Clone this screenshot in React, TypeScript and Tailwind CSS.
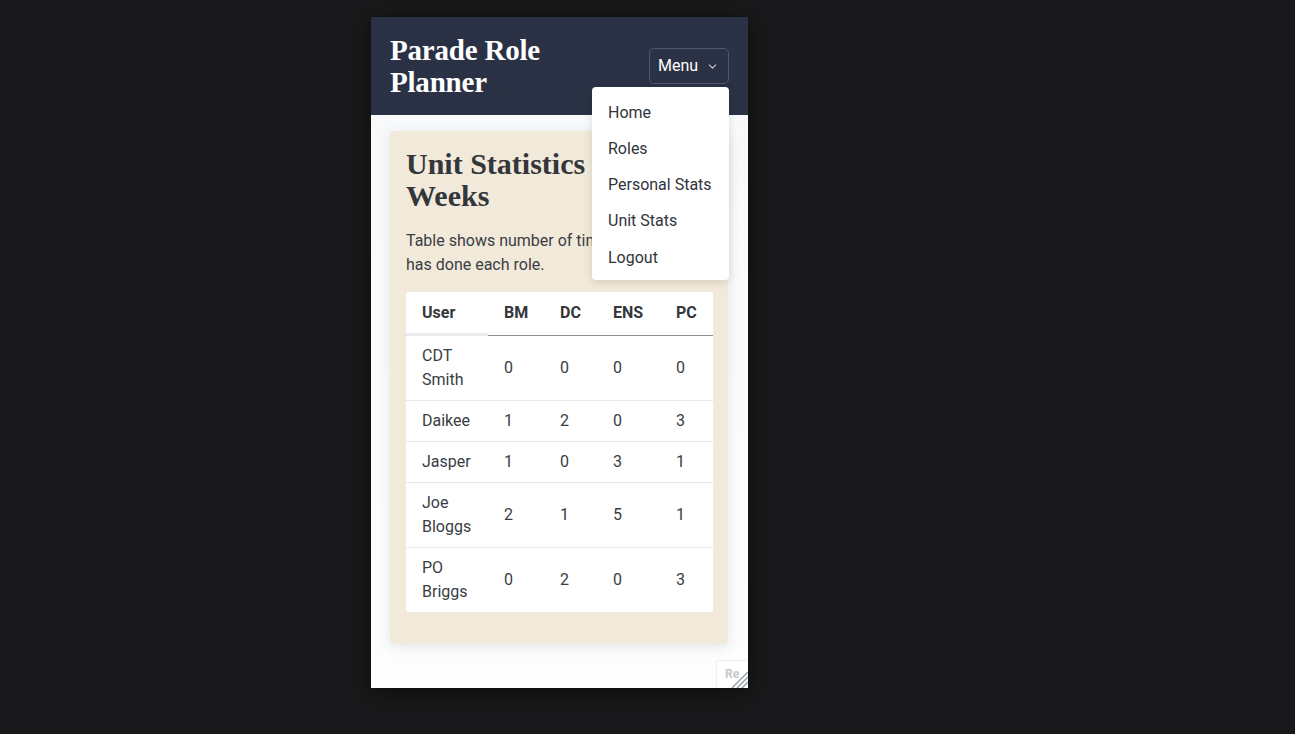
import { ChevronDown } from "lucide-react";

const rows = [
  { user: "CDT Smith", bm: 0, dc: 0, ens: 0, pc: 0 },
  { user: "Daikee", bm: 1, dc: 2, ens: 0, pc: 3 },
  { user: "Jasper", bm: 1, dc: 0, ens: 3, pc: 1 },
  { user: "Joe Bloggs", bm: 2, dc: 1, ens: 5, pc: 1 },
  { user: "PO Briggs", bm: 0, dc: 2, ens: 0, pc: 3 },
];

const menuItems = ["Home", "Roles", "Personal Stats", "Unit Stats", "Logout"];

const serif = { fontFamily: "'Liberation Serif', 'DejaVu Serif', serif" };

const App = () => {
  return (
    <div className="min-h-screen w-full bg-[#19191b] pl-[371px] pt-[17px] font-['Roboto',sans-serif]">
      <div className="w-[377px] h-[671px] flex flex-col bg-[#f8f9fb] shadow-[0_4px_20px_rgba(0,0,0,0.5)] relative overflow-hidden">
        {/* header */}
        <header className="h-[98px] shrink-0 bg-gradient-to-br from-[#2a3144] to-[#2b3245] flex items-start justify-between px-[19px] pt-[17px] relative z-20">
          <h1
            className="text-white font-bold text-[29px] leading-[32px] w-[170px] tracking-[-0.2px]"
            style={serif}
          >
            Parade Role Planner
          </h1>
          <div className="relative mt-[14px]">
            <button className="h-[36px] w-[80px] flex items-center justify-between pl-[8px] pr-[9px] border border-[#4d5870] rounded-[5px] text-white text-[16px]">
              <span>Menu</span>
              <ChevronDown className="w-[13px] h-[13px] text-[#c9ced8]" strokeWidth={2} />
            </button>
            <div className="absolute right-0 top-[39px] w-[137px] bg-white rounded-[4px] shadow-[0_2px_10px_rgba(0,0,0,0.12)] pt-[8px] pb-[4px]">
              {menuItems.map((m, i) => (
                <div
                  key={m}
                  className={`px-[16px] flex items-center whitespace-nowrap text-[16px] text-[#30343b] ${i === menuItems.length - 1 ? "h-[37px]" : "h-[36px]"}`}
                >
                  {m}
                </div>
              ))}
            </div>
          </div>
        </header>

        {/* main */}
        <main className="flex-1 px-[19px] pt-[16px] bg-gradient-to-b from-[#f8f9fb] to-[#fdfdfe]">
          <div className="w-[338px] bg-[#f1e9d9] rounded-[4px] shadow-[0_3px_12px_rgba(60,70,90,0.12)] px-[16px] pt-[17px] pb-[32px]">
            <h2 className="text-[#33363b] font-bold text-[30px] leading-[32px]" style={serif}>
              Unit Statistics – Last 4 Weeks
            </h2>
            <p className="mt-[17px] text-[16px] leading-[24px] text-[#3a3d43]">
              Table shows number of times each user has done each role.
            </p>
            <div className="mt-[15px] bg-white rounded-[3px] w-[307px]">
              <table className="w-[307px] text-[16px] text-[#3a3d43] border-collapse table-fixed">
                <colgroup>
                  <col className="w-[82px]" />
                  <col className="w-[56px]" />
                  <col className="w-[53px]" />
                  <col className="w-[63px]" />
                  <col className="w-[53px]" />
                </colgroup>
                <thead>
                  <tr className="h-[43px]">
                    <th className="text-left font-bold px-[16px] border-b border-[#e9ebef] shadow-[inset_0_-2px_0_#e9ebef] text-[#33363b]">User</th>
                    <th className="text-left font-bold px-[16px] border-b border-[#8a8d93] text-[#33363b]">BM</th>
                    <th className="text-left font-bold px-[16px] border-b border-[#8a8d93] text-[#33363b]">DC</th>
                    <th className="text-left font-bold px-[16px] border-b border-[#8a8d93] text-[#33363b]">ENS</th>
                    <th className="text-left font-bold px-[16px] border-b border-[#8a8d93] text-[#33363b]">PC</th>
                  </tr>
                </thead>
                <tbody>
                  {rows.map((r, i) => (
                    <tr key={r.user} className={i < rows.length - 1 ? "border-b border-[#e6e7ea]" : ""}>
                      <td className="px-[16px] py-[8px] leading-[24px]">{r.user}</td>
                      <td className="px-[16px] py-[8px] leading-[24px]">{r.bm}</td>
                      <td className="px-[16px] py-[8px] leading-[24px]">{r.dc}</td>
                      <td className="px-[16px] py-[8px] leading-[24px]">{r.ens}</td>
                      <td className="px-[16px] py-[8px] leading-[24px]">{r.pc}</td>
                    </tr>
                  ))}
                </tbody>
              </table>
            </div>
          </div>
        </main>

        {/* corner badge + resize handle */}
        <div className="absolute right-0 bottom-0 w-[32px] h-[28px] bg-white/80 border-l border-t border-[#eceef1] rounded-tl-[3px] pl-[8px] pt-[4px] text-[12px] font-bold text-[#c4c7cc] overflow-hidden">
          Re
        </div>
        <svg className="absolute right-0 bottom-0" width="20" height="20" viewBox="0 0 20 20">
          <path d="M20 4 L4 20 M20 9 L9 20 M20 14 L14 20" stroke="#9aa0a8" strokeWidth="1.5" />
        </svg>
      </div>
    </div>
  );
};

export default App;
